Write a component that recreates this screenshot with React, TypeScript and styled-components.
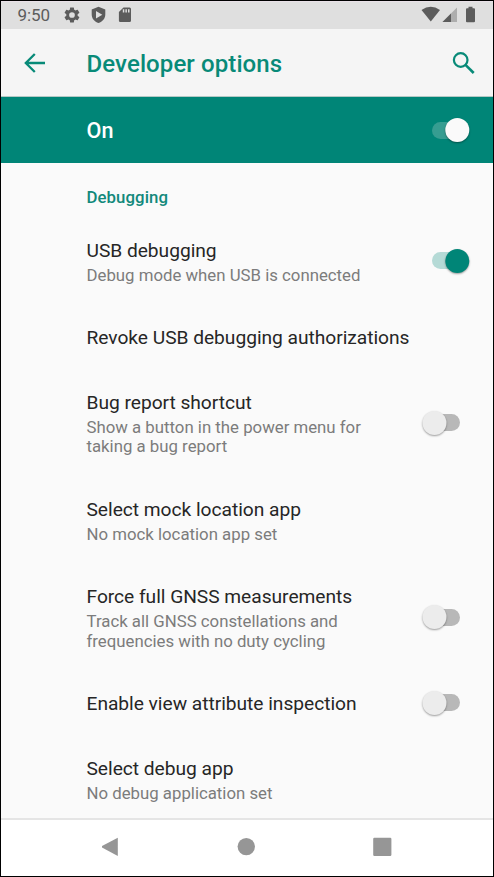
import React from "react";
import styled, { createGlobalStyle } from "styled-components";

const GlobalStyle = createGlobalStyle`
  * { box-sizing: border-box; }
  body { margin: 0; background: #000; font-family: Roboto, sans-serif; }
`;

const Phone = styled.div`
  width: 494px;
  height: 877px;
  border: 1px solid #000;
  background: #fafafa;
  display: flex;
  flex-direction: column;
  overflow: hidden;
`;

const StatusBar = styled.header`
  height: 28px;
  flex: none;
  display: flex;
  align-items: center;
  padding: 0 0 0 16.4px;
  background: #dfdfdf;
  color: #5c5c5c;
  box-shadow: inset 0 1px #e9e1e8;
`;

const Clock = styled.span`
  font-size: 17px;
  line-height: 20px;
  width: 45.6px;
  padding-bottom: 1px;
`;

const Glyphs = styled.svg`
  display: block;
  flex: none;
`;

const Spacer = styled.div`
  flex: 1;
`;

const AppBar = styled.div`
  height: 68px;
  flex: none;
  display: flex;
  align-items: center;
  background: #f5f5f5;
  color: #088a78;
  border-bottom: 1px solid #b5c9c5;
`;

const BackButton = styled.div`
  width: 85.5px;
  padding-left: 19px;
`;

const Title = styled.h1`
  margin: 0;
  flex: 1;
  font-size: 24px;
  line-height: 28px;
  font-weight: 500;
  letter-spacing: 0.1px;
  padding-top: 2px;
`;

const SearchButton = styled.div`
  width: 44px;
`;

const MasterSwitch = styled.div`
  height: 66px;
  flex: none;
  display: flex;
  align-items: center;
  padding: 0 21px 0 85.5px;
  background: #008577;
  color: #fff;
`;

const MasterLabel = styled.div`
  flex: 1;
  font-size: 21.6px;
  line-height: 26px;
  font-weight: 500;
  padding-top: 1px;
`;

const List = styled.main`
  flex: 1;
  min-height: 0;
  overflow: hidden;
`;

const Category = styled.h2`
  margin: 0;
  height: 55.7px;
  padding: 24px 0 0 85.5px;
  font-size: 16.8px;
  line-height: 20px;
  font-weight: 500;
  letter-spacing: 0.07px;
  color: #12897b;
`;

const Row = styled.div`
  display: flex;
  align-items: center;
  padding: 19.15px 21px 19.15px 85.5px;
`;

const RowText = styled.div`
  flex: 1;
  min-width: 0;
`;

const RowTitle = styled.div`
  font-size: 19.2px;
  line-height: 26px;
  letter-spacing: -0.03px;
  color: #262626;
  white-space: nowrap;
`;

const Summary = styled.div`
  padding: 2px 0 1.5px;
  font-size: 16.8px;
  line-height: 19.7px;
  color: #7c7c7c;
  white-space: pre;
`;

const Toggle = styled.div<{ $track: string; $lift: number }>`
  flex: none;
  width: 28.5px;
  height: 17px;
  margin: 0 12px ${(p) => p.$lift}px 0;
  border-radius: 9px;
  display: flex;
  align-items: center;
  justify-content: center;
  background: ${(p) => p.$track};
`;

const Thumb = styled.div<{ $on: boolean; $color: string }>`
  flex: none;
  width: 24px;
  height: 24px;
  border-radius: 50%;
  transform: translateX(${(p) => (p.$on ? 11.3 : -11.5)}px);
  background: ${(p) => p.$color};
  box-shadow: 0 1px 2px rgba(0, 0, 0, 0.38);
`;

const NavBar = styled.nav`
  height: 58px;
  flex: none;
  display: flex;
  align-items: center;
  justify-content: center;
  background: #fff;
  border-top: 2px solid #e5e5e5;
`;

type Option = { title: string; summary?: string; on?: boolean };

const options: Option[] = [
  { title: "USB debugging", summary: "Debug mode when USB is connected", on: true },
  { title: "Revoke USB debugging authorizations" },
  { title: "Bug report shortcut", summary: "Show a button in the power menu for\ntaking a bug report", on: false },
  { title: "Select mock location app", summary: "No mock location app set" },
  { title: "Force full GNSS measurements", summary: "Track all GNSS constellations and\nfrequencies with no duty cycling", on: false },
  { title: "Enable view attribute inspection", on: false },
  { title: "Select debug app", summary: "No debug application set" },
];

function Switch({ on, light = false }: { on: boolean; light?: boolean }) {
  const track = light ? "#369d91" : on ? "#b5dad6" : "#b8b8b8";
  const thumb = light ? "#fafafa" : on ? "#008577" : "#ececec";
  return (
    <Toggle $track={track} $lift={light ? 0 : 3} role="switch" aria-checked={on}>
      <Thumb $on={on} $color={thumb} />
    </Toggle>
  );
}

export default function App() {
  return (
    <>
      <GlobalStyle />
      <Phone>
        <StatusBar>
          <Clock>9:50</Clock>
          <Glyphs width="80" height="28" viewBox="63 1 80 28" fill="#5c5c5c">
            <g transform="translate(62.5 5.5) scale(.79)">
              <path d="M19.14 12.94c.04-.3.06-.61.06-.94 0-.32-.02-.64-.07-.94l2.03-1.58a.49.49 0 0 0 .12-.61l-1.92-3.32a.49.49 0 0 0-.59-.22l-2.39.96c-.5-.38-1.03-.7-1.62-.94l-.36-2.54a.48.48 0 0 0-.48-.41h-3.84c-.24 0-.43.17-.47.41l-.36 2.54c-.59.24-1.13.57-1.62.94l-2.39-.96a.49.49 0 0 0-.59.22L2.74 8.87c-.12.21-.08.47.12.61l2.03 1.58c-.05.3-.09.63-.09.94s.02.64.07.94l-2.03 1.58a.49.49 0 0 0-.12.61l1.92 3.32c.12.22.37.29.59.22l2.39-.96c.5.38 1.03.7 1.62.94l.36 2.54c.05.24.24.41.48.41h3.84c.24 0 .44-.17.47-.41l.36-2.54c.59-.24 1.13-.56 1.62-.94l2.39.96c.22.08.47 0 .59-.22l1.92-3.32a.49.49 0 0 0-.12-.61l-2.01-1.58zM12 15.6a3.6 3.6 0 1 1 0-7.2 3.6 3.6 0 0 1 0 7.2z" />
            </g>
            <path fillRule="evenodd" d="M98.5 6.8L105.3 9.5V14.5C105.3 18.5 102.5 21.8 98.5 23C94.5 21.8 91.7 18.5 91.7 14.5V9.5ZM96 11V18.5L102.3 14.7Z" />
            <path fillRule="evenodd" d="M123.5 7.5H129.6Q131 7.5 131 9V20.7Q131 22.1 129.6 22.1H120.3Q118.9 22.1 118.9 20.7V12.1ZM122.8 9.3V12.5H124.3V9.3ZM125.4 9.3V12.5H126.9V9.3ZM128 9.3V12.5H129.5V9.3Z" />
          </Glyphs>
          <Spacer />
          <Glyphs width="76" height="28" viewBox="417 1 76 28" fill="#5c5c5c">
            <path d="M421.5 10Q430.7 3.5 440 10L430.8 21.6Z" />
            <path d="M457 7.5V22H442.5Z" fill="#adadad" />
            <path d="M451 13.5V22H442.5Z" />
            <path d="M468.5 6.7H472.5V8.2H474Q475 8.2 475 9.2V21.3Q475 22.3 474 22.3H467Q466 22.3 466 21.3V9.2Q466 8.2 467 8.2H468.5Z" />
          </Glyphs>
        </StatusBar>
        <AppBar>
          <BackButton>
            <Glyphs width="30" height="30" viewBox="20 48 30 30" fill="none" stroke="#088a78" strokeWidth="2.3">
              <path d="M45 63H26M34.8 54L25.8 63L34.8 72" />
            </Glyphs>
          </BackButton>
          <Title>Developer options</Title>
          <SearchButton>
            <Glyphs width="30" height="30" viewBox="449 47.5 30 30" fill="none" stroke="#088a78" strokeWidth="2.2">
              <circle cx="460.7" cy="59.5" r="6.8" />
              <path d="M465.5 64.3L473.7 72.5" strokeWidth="2.6" />
            </Glyphs>
          </SearchButton>
        </AppBar>
        <MasterSwitch>
          <MasterLabel>On</MasterLabel>
          <Switch on light />
        </MasterSwitch>
        <List>
          <Category>Debugging</Category>
          {options.map((o) => (
            <Row key={o.title}>
              <RowText>
                <RowTitle>{o.title}</RowTitle>
                {o.summary && <Summary>{o.summary}</Summary>}
              </RowText>
              {o.on !== undefined && <Switch on={o.on} />}
            </Row>
          ))}
        </List>
        <NavBar>
          <Glyphs width="290" height="26" viewBox="102 835 290 26" fill="#969696">
            <path d="M117.8 837.7V856L100.7 846.8Z" />
            <circle cx="246.3" cy="846.6" r="8.7" />
            <rect x="373.2" y="837.7" width="18.2" height="18.2" rx="1.2" />
          </Glyphs>
        </NavBar>
      </Phone>
    </>
  );
}
